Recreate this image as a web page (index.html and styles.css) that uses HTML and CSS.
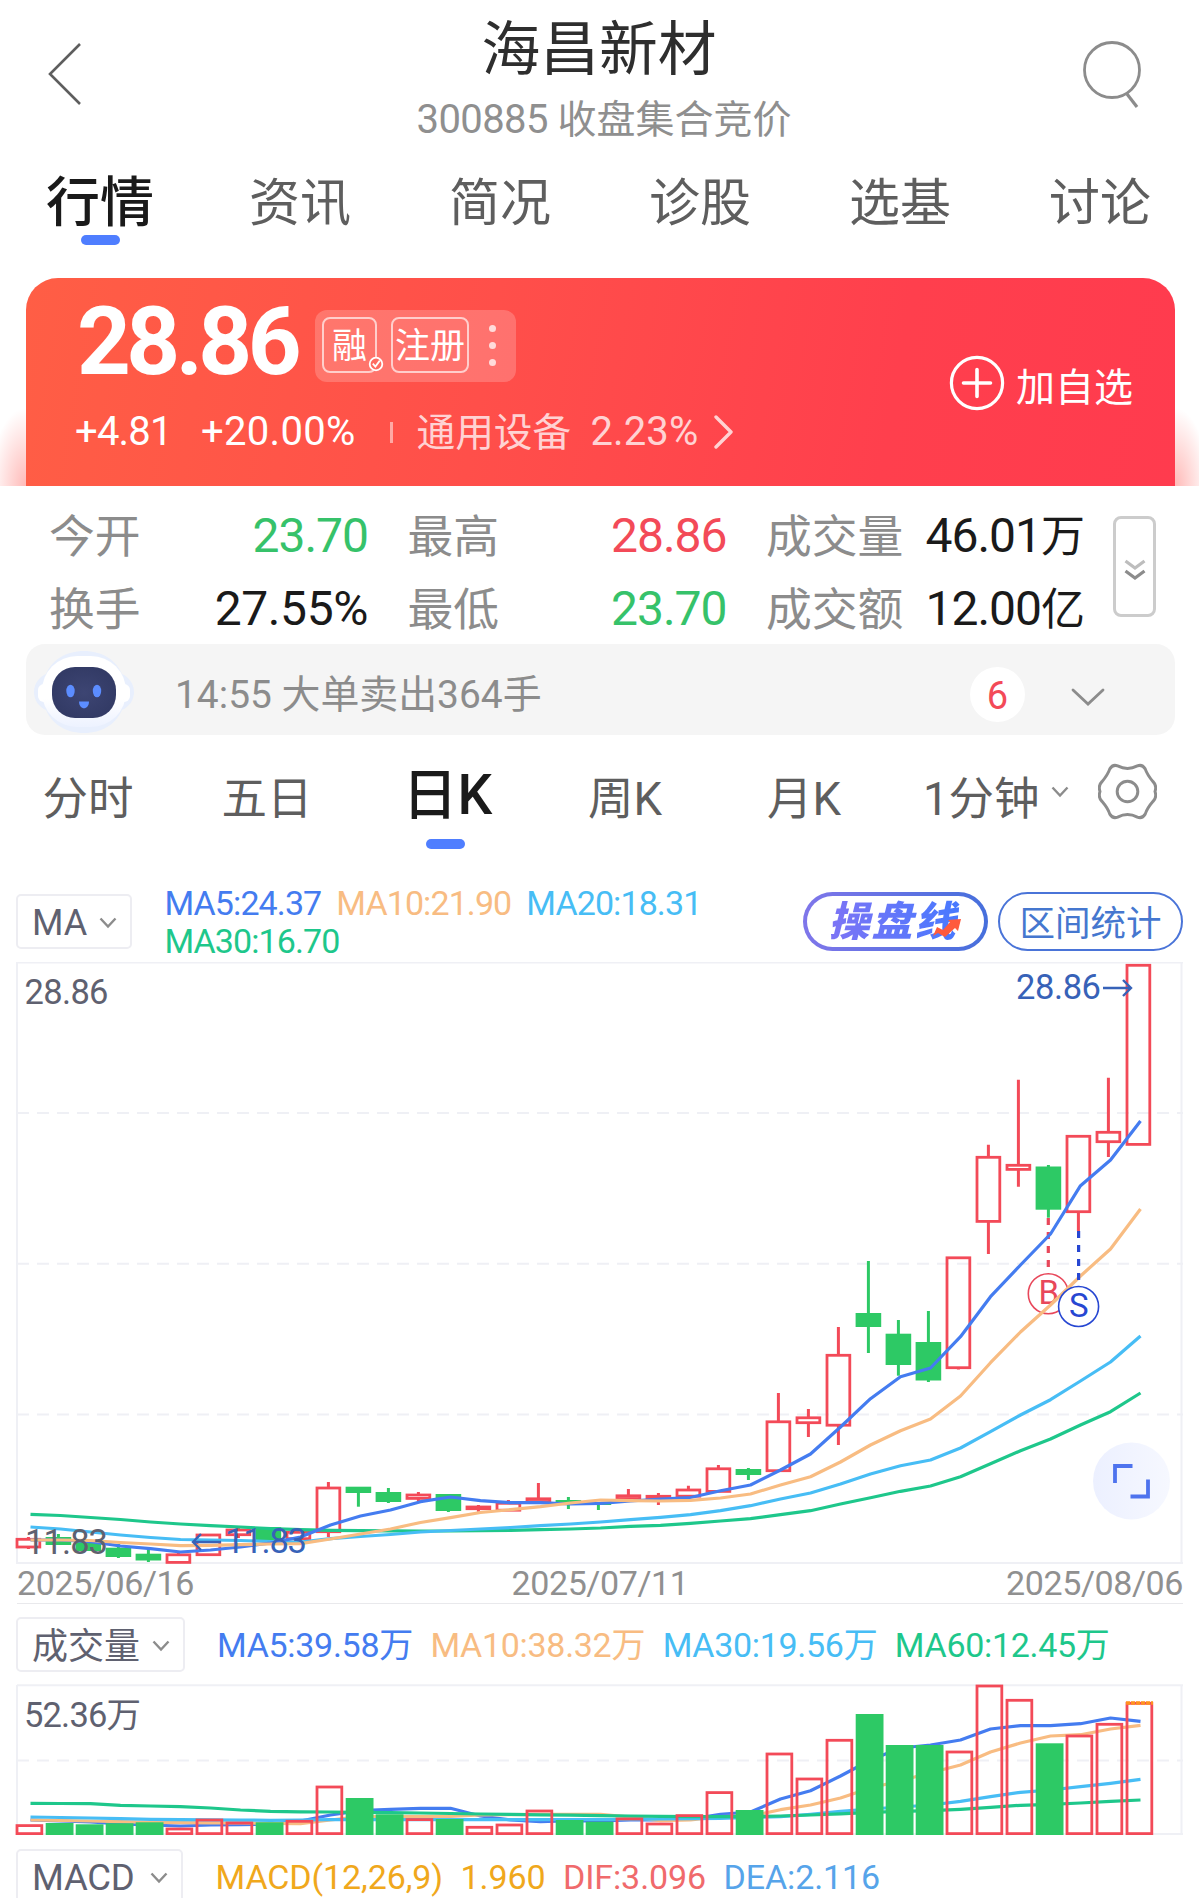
FILE: index.html
```
<!DOCTYPE html>
<html lang="zh-CN">
<head>
<meta charset="utf-8">
<title>海昌新材 300885</title>
<link rel="stylesheet" href="styles.css">
</head>
<body>
<div class="app">
  <header class="header">
    <svg class="icon-back" viewBox="0 0 36 64" fill="none"><path d="M33 2 3 32 33 62" stroke="#5e5e5e" stroke-width="2.6"/></svg>
    <div class="heading">
      <h1 class="title">海昌新材</h1>
      <p class="subtitle"><span class="code">300885</span> 收盘集合竞价</p>
    </div>
    <svg class="icon-search" viewBox="0 0 60 70" fill="none" stroke="#8c8c8c" stroke-width="2.8"><circle cx="30" cy="30" r="27.5"/><path d="m45 54 10 13" stroke-width="3.2"/></svg>
  </header>

  <nav class="tabs">
    <a class="tab active">行情</a><a class="tab">资讯</a><a class="tab">简况</a><a class="tab">诊股</a><a class="tab">选基</a><a class="tab">讨论</a>
  </nav>

  <section class="quote-wrap">
    <div class="quote">
      <div class="quote-main">
        <div class="price-row">
          <span class="price">28.86</span>
          <div class="badges">
            <span class="badge badge-margin">融<svg class="badge-check" viewBox="0 0 16 16" fill="none" stroke="#fff" stroke-width="1.8"><circle cx="8" cy="8" r="6.3" fill="#ff6c62"/><path d="m4.8 7.6 2.6 3 4.4-6"/></svg></span>
            <span class="badge">注册</span>
            <span class="dots"><i></i><i></i><i></i></span>
          </div>
        </div>
        <div class="change-row">
          <span class="delta">+4.81</span>
          <span class="percent">+20.00%</span>
          <i class="divider"></i>
          <span class="sector">通用设备</span>
          <span class="sector-change">2.23%</span>
          <svg class="icon-next" viewBox="0 0 20 34" fill="none"><path d="m2 2 15 15L2 32" stroke="#ffd2d3" stroke-width="3.4" stroke-linecap="round" stroke-linejoin="round"/></svg>
        </div>
      </div>
      <div class="add">
        <svg class="icon-add" viewBox="0 0 56 56" fill="none" stroke="#fff" stroke-width="3.6" stroke-linecap="round"><circle cx="28" cy="28" r="25.6" stroke-width="3.2"/><path d="M28 14.5v27M14.5 28h27"/></svg>
        <span>加自选</span>
      </div>
    </div>
  </section>

  <section class="stats">
    <dl class="stat-grid">
      <div class="stat"><dt>今开</dt><dd class="down">23.70</dd></div>
      <div class="stat"><dt>最高</dt><dd class="up">28.86</dd></div>
      <div class="stat"><dt>成交量</dt><dd>46.01<small>万</small></dd></div>
      <div class="stat"><dt>换手</dt><dd class="turnover">27.55%</dd></div>
      <div class="stat"><dt>最低</dt><dd class="down">23.70</dd></div>
      <div class="stat"><dt>成交额</dt><dd>12.00<small>亿</small></dd></div>
    </dl>
    <div class="expander">
      <svg viewBox="0 0 22 22" fill="none" stroke-width="3.2"><path d="m1.5 2 9.5 7 9.5-7" stroke="#bdbdbd"/><path d="m1.5 12 9.5 7 9.5-7" stroke="#8c8c8c"/></svg>
    </div>
  </section>

  <section class="notice">
    <svg class="robot" viewBox="0 0 100 82">
      <defs>
        <radialGradient id="face"><stop offset="0" stop-color="#3d4573"/><stop offset="1" stop-color="#333b66"/></radialGradient>
        <linearGradient id="head" x2="0" y2="1"><stop offset=".6" stop-color="#fff"/><stop offset="1" stop-color="#edf2ff"/></linearGradient>
      </defs>
      <path d="M50 0C68 0 82 9 88 23c7 3 12 10 12 18s-5 15-12 18C82 73 68 82 50 82S18 73 12 59C5 56 0 49 0 41s5-15 12-18C18 9 32 0 50 0Z" fill="#e8effd"/>
      <rect x="4" y="33" width="92" height="18" rx="6" fill="#fff"/>
      <rect x="8" y="5" width="84" height="71" rx="35" fill="url(#head)"/>
      <rect x="18" y="16" width="64" height="51" rx="23" fill="url(#face)"/>
      <ellipse cx="36.500" cy="40" rx="4.200" ry="6.300" fill="#5c8dff"/><ellipse cx="63" cy="40" rx="4.200" ry="6.300" fill="#5c8dff"/>
      <path d="M45 50.500h10c0 9-10 9-10 0Z" fill="#5c8dff"/>
    </svg>
    <p class="notice-text"><span>14:55</span> 大单卖出<span>364</span>手</p>
    <span class="count">6</span>
    <svg class="icon-down" viewBox="0 0 34 18" fill="none"><path d="m2 2 15 14L32 2" stroke="#8c8c8c" stroke-width="2.8" stroke-linecap="round"/></svg>
  </section>

  <nav class="periods">
    <a>分时</a><a>五日</a><a class="active">日K</a><a>周K</a><a>月K</a>
    <a class="minutes">1分钟<svg class="caret" viewBox="0 0 18 12" fill="none"><path d="m1.500 1.500 7.500 8 7.500-8" stroke="#8c8c8c" stroke-width="2.400"/></svg></a>
    <svg class="icon-gear" viewBox="0 0 60 60" fill="none" stroke="#8c8c8c" stroke-width="3"><path d="M20 4Q15 2 12 7Q10 13 4 20 Q0 24 2 30Q0 36 4 40Q10 47 12 53Q15 58 20 56Q30 51 40 56Q45 58 48 53Q50 47 56 40Q60 36 58 30Q60 24 56 20Q50 13 48 7Q45 2 40 4Q30 9 20 4Z"/><circle cx="30" cy="30" r="10.500"/></svg>
  </nav>

  <section class="ma-bar">
    <button class="picker">MA<svg class="caret" viewBox="0 0 18 12" fill="none"><path d="m1.500 1.500 7.500 8 7.500-8" stroke="#8c8c8c" stroke-width="2.400"/></svg></button>
    <div class="legend">
      <span class="blue">MA5:24.37</span><span class="orange">MA10:21.90</span><span class="cyan">MA20:18.31</span><span class="green">MA30:16.70</span>
    </div>
    <div class="actions">
      <button class="pill trend"><span class="trend-text">操盘线</span><svg class="trend-arrow" viewBox="0 0 30 20"><path d="M1 18 5 9l6 3 7-8-2-2 13-1-3 12-3-3-10 9-7-4Z" fill="#ff5a3d"/></svg></button>
      <button class="pill">区间统计</button>
    </div>
  </section>

  <svg class="price-chart" id="price" viewBox="0 962 1199 602">
    <defs><linearGradient id="full"><stop offset="0" stop-color="#ecf0ff"/><stop offset="1" stop-color="#f6f8ff"/></linearGradient></defs>
    <g class="frame"><path d="M17 962.5H1183" stroke-width="1"/><path d="M17 962V1563H1183M1181.500 962V1563"/><path class="grid" d="M17 1113H1183M17 1263.700H1183M17 1414.500H1183"/></g>
    <g id="candles"></g>
    <g class="marker buy"><path d="M1048.300 1218V1270"/><circle cx="1048.300" cy="1293.700" r="20"/><text x="1048.800" y="1303.500">B</text></g>
    <g id="price-lines"></g>
    <g class="marker sell"><path d="M1078.600 1231V1280"/><circle cx="1078.600" cy="1306.500" r="20"/><text x="1078.800" y="1317">S</text></g>
    <g class="axis"><text x="24.500" y="1003.500" textLength="84">28.86</text><text x="25" y="1553.500" textLength="83">11.83</text></g>
    <g class="extreme"><text x="1016" y="998.500" textLength="85">28.86</text><path d="M1103 988H1131M1123 980l8 8-8 8"/><text x="225" y="1552.500" textLength="82">11.83</text><path d="M221 1542H193M201 1534l-8 8 8 8"/></g>
    <g class="fullscreen"><circle cx="1131.500" cy="1481" r="38.500"/><path d="M1132.500 1466H1115V1483M1130.500 1496.500H1148V1479.500"/></g>
  </svg>
  <div class="dates"><span>2025/06/16</span><span>2025/07/11</span><span>2025/08/06</span></div>

  <section class="sub-bar">
    <button class="picker"><span class="picker-label">成交量</span><svg class="caret" viewBox="0 0 18 12" fill="none"><path d="m1.500 1.500 7.500 8 7.500-8" stroke="#8c8c8c" stroke-width="2.400"/></svg></button>
    <div class="legend volume-legend"><span class="blue">MA5:39.58万</span><span class="orange">MA10:38.32万</span><span class="cyan">MA30:19.56万</span><span class="green">MA60:12.45万</span></div>
  </section>
  <svg class="volume-chart" id="volume" viewBox="0 1684 1199 152">
    <g class="frame"><path d="M17 1685.300H1183" stroke-width="1"/><path d="M17 1685V1834H1183M1181.500 1685V1834"/><path class="grid" d="M17 1760.500H1183"/></g>
    <g id="volume-lines"></g>
    <g id="bars"></g>
    <g class="axis"><text x="24" y="1727" textLength="117">52.36万</text></g>
  </svg>
  <section class="sub-bar macd-bar">
    <button class="picker">MACD<svg class="caret" viewBox="0 0 18 12" fill="none"><path d="m1.500 1.500 7.500 8 7.500-8" stroke="#8c8c8c" stroke-width="2.400"/></svg></button>
    <div class="legend macd-legend"><span class="gold">MACD(12,26,9)</span><span class="gold">1.960</span><span class="red">DIF:3.096</span><span class="sky">DEA:2.116</span></div>
  </section>
</div>
<script src="charts.js"></script>
</body>
</html>
```
FILE: styles.css
```
* { box-sizing: border-box; }
body { margin: 0; background: #fff; }
h1, p, dl, dd { margin: 0; font-weight: 400; }
button { margin: 0; padding: 0; font: inherit; background: none; }
svg { display: block; flex: none; }

.app {
  width: 1199px;
  height: 1898px;
  overflow: hidden;
  font-family: Roboto, "Noto Sans CJK SC", sans-serif;
  color: #1a1a1a;
  white-space: nowrap;
}

/* Header */
.header { display: flex; justify-content: space-between; height: 150px; padding: 10px 57px 0 47px; }
.icon-back { width: 36px; height: 64px; margin-top: 32px; }
.icon-search { width: 60px; height: 70px; margin-top: 30px; }
.heading { text-align: center; padding: 2px 0 0 35px; }
.title { padding-right: 2px; font-size: 58.800px; line-height: 76px; color: #2e2e2e; }
.subtitle { margin-top: 7px; padding-left: 8px; font-size: 39px; line-height: 50px; color: #8f8f8f; }
.code { font-size: 40px; letter-spacing: -.6px; }

/* Section tabs */
.tabs { display: grid; grid-template-columns: repeat(6, 200px); height: 128px; padding-top: 18px; }
.tab { display: flex; flex-direction: column; align-items: center; font-size: 51px; line-height: 72px; color: #5e5e5e; }
.tab.active { font-size: 54px; font-weight: 500; color: #1a1a1a; }
.tab.active::after, .periods .active::after { content: ""; width: 39px; height: 10px; border-radius: 5px; background: #4f7eff; }
.tab.active::after { margin-top: -5px; }

/* Quote card */
.quote-wrap {
  height: 208px;
  padding: 0 24px 0 26px;
  background:
    radial-gradient(ellipse 36px 78px at 26px 100%, rgba(255, 90, 85, .42), rgba(255, 90, 85, 0)) no-repeat left / 26px 100%,
    radial-gradient(ellipse 34px 78px at 0 100%, rgba(255, 90, 85, .42), rgba(255, 90, 85, 0)) no-repeat right / 24px 100%;
}
.quote {
  display: flex;
  justify-content: space-between;
  height: 208px;
  padding: 0 42px 0 50px;
  border-radius: 32px 32px 0 0;
  background: linear-gradient(100deg, #ff5e45 0%, #ff4f4a 40%, #ff3f4d 75%, #ff3b4e 100%);
  color: #fff;
}
.price-row { display: flex; align-items: center; height: 124px; padding-top: 12px; }
.price { width: 239px; padding-left: 1px; font-size: 94px; font-weight: 700; line-height: 110px; letter-spacing: -4.600px; margin-top: -8px; }
.badges { display: flex; align-items: center; width: 201px; height: 72px; margin-top: 0; padding-left: 7px; border-radius: 12px; background: rgba(255, 255, 255, .2); }
.badge { position: relative; height: 56px; padding: 1px 2px 0; border: 2px solid rgba(255, 255, 255, .65); border-radius: 8px; font-size: 35px; line-height: 54px; margin-right: 20px; margin-top: -2px; }
.badge-margin { width: 55px; padding: 1px 8px 0; margin-right: 14px; }
.badge-check { position: absolute; right: -9px; bottom: -1px; width: 16px; height: 16px; }
.dots { display: grid; gap: 10px; margin-top: -2px; }
.dots i { width: 7px; height: 7px; border-radius: 50%; background: rgba(255, 255, 255, .75); }
.change-row { display: flex; align-items: center; height: 60px; font-size: 40px; line-height: 60px; }
.delta { width: 126px; letter-spacing: -.8px; margin-left: -1px; }
.percent { width: 189px; letter-spacing: .3px; }
.divider { width: 2.500px; height: 21px; background: rgba(255, 255, 255, .5); }
.sector { width: 173px; padding-left: 24px; box-sizing: content-box; font-size: 38.700px; color: #ffd2d3; padding-top: 1px; }
.sector-change { width: 124px; padding-left: 1px; letter-spacing: .1px; color: #ffd2d3; }
.icon-next { width: 20px; height: 34px; }
.add { display: flex; align-items: center; gap: 11px; padding-top: 2px; font-size: 39px; line-height: 56px; }
.icon-add { width: 56px; height: 56px; }
.add span { padding-top: 9px; }

/* Key figures */
.stats { display: flex; height: 158px; padding: 13px 43px 0 49px; justify-content: space-between; }
.stat-grid { display: grid; grid-template-columns: repeat(3, 319px); column-gap: 39.500px; grid-auto-rows: 73px; }
.stat { display: flex; justify-content: space-between; line-height: 73px; }
.stat dt { padding-top: 2px; font-size: 45.800px; color: #8c8c8c; }
.stat dd { font-size: 48px; letter-spacing: -1px; }
.stat .turnover { letter-spacing: -.4px; }
.stat small { font-size: 44px; letter-spacing: 0; }
.stat .up { color: #f34a58; }
.stat .down { color: #36c26a; }
.expander { display: flex; align-items: center; justify-content: center; width: 43px; height: 101px; margin-top: 17px; border: 3px solid #ccc; border-radius: 8px; }
.expander svg { width: 22px; height: 22px; margin-top: 6px; }

/* Notice */
.notice { display: flex; align-items: center; height: 91px; margin: 0 24px 0 26px; padding: 0 70px 0 8px; border-radius: 19px; background: #f5f5f5; }
.robot { width: 100px; height: 82px; margin-top: 4px; }
.notice-text { flex: 1; padding: 10px 0 0 41px; font-size: 38.900px; line-height: 60px; color: #8c8c8c; }
.count { display: block; width: 55px; height: 55px; margin: 9px 46px 0 0; border-radius: 50%; background: #fff; color: #f34a58; text-align: center; font-size: 38px; line-height: 58px; }
.icon-down { width: 34px; height: 18px; margin-top: 14px; }

/* Chart periods */
.periods { display: grid; grid-template-columns: repeat(5, 179px) 174px 60px; height: 157px; padding-top: 27px; }
.periods a { display: flex; flex-direction: column; align-items: center; padding: 2px 3px 0 0; font-size: 45.500px; line-height: 72px; color: #5e5e5e; }
.periods .active { margin-top: -5px; padding: 0; font-size: 55px; font-weight: 500; line-height: 76px; color: #1a1a1a; }
.periods .active::after { margin: 6px 4px 0 0; }
.periods .minutes { flex-direction: row; align-items: flex-start; justify-content: space-between; padding: 2px 0 0 28px; }
.caret { width: 18px; height: 12px; }
.minutes .caret { margin: 22px 0 0; }
.icon-gear { width: 59px; height: 59px; margin-left: 29px; }

/* Indicator bars */
.picker { display: flex; align-items: center; height: 55px; border: 2.500px solid #ededf2; border-radius: 5px; padding: 3px 13px 0 14px; font-size: 36px; line-height: 50px; color: #5f6170; justify-content: space-between; }
.picker-label { padding-top: 2px; }
.ma-bar { display: flex; height: 70px; padding: 0 16px 0 16px; }
.ma-bar .picker { width: 116px; margin-top: 2px; }
.legend { display: flex; flex-wrap: wrap; font-size: 34px; line-height: 38px; }
.ma-bar .legend { width: 637px; padding-left: 32.500px; margin-top: -8px; column-gap: 15px; align-content: flex-start; letter-spacing: -.9px; }
.blue { color: #447cf0; } .orange { color: #f8bc82; } .cyan { color: #47bdf5; } .green { color: #1ec78b; }
.gold { color: #f0a81c; } .red { color: #f06a6c; } .sky { color: #56a4ea; }
.actions { display: flex; gap: 10px; margin-left: auto; }
.pill { position: relative; display: flex; justify-content: center; width: 185px; height: 59px; padding-top: 3px; border: 2.500px solid #4a74d8; border-radius: 30px; color: #4577cf; font-size: 35.500px; line-height: 54px; }
.trend { padding-top: 1px; border: 4px solid transparent; background: linear-gradient(#fff, #fff) padding-box, linear-gradient(90deg, #7f76ea, #466fdc) border-box; }
.trend-text { padding-right: 5px; font-size: 41px; font-weight: 900; font-style: italic; line-height: 50px; letter-spacing: 2px; background: linear-gradient(90deg, #7d74f5, #4679ff); background-clip: text; color: transparent; }
.trend-arrow { position: absolute; left: 125px; top: 22px; width: 30px; height: 20px; }

/* Charts */
.price-chart { width: 1199px; height: 602px; }
.volume-chart { width: 1199px; height: 152px; }
.frame path { fill: none; stroke: #eff0f5; stroke-width: 2; }
.frame .grid { stroke-dasharray: 12 8; }
.axis text, .extreme text { font-size: 34.500px; fill: #5f6170; }
.extreme text { fill: #3762b8; }
.extreme path { fill: none; stroke: #3762b8; stroke-width: 2.400; }
.rise { fill: none; stroke: #f34a58; stroke-width: 2.800; }
.rise.wick, .fall.wick { stroke-width: 3; }
.fall { fill: #2dc965; stroke: none; }
.fall.wick { stroke: #2dc965; }
.line { fill: none; stroke-width: 3.200; stroke-linejoin: round; }
.line.blue { stroke: #447cf0; } .line.orange { stroke: #f8bc82; } .line.cyan { stroke: #47bdf5; } .line.green { stroke: #1ec78b; }
.estimate { stroke: #ff921e; stroke-width: 3.500; stroke-dasharray: 4 1; }
.marker path { stroke-width: 3.200; stroke-dasharray: 7 7; }
.marker circle { fill: #fff; stroke-width: 1.600; }
.marker text { font-size: 33px; text-anchor: middle; }
.buy { stroke: #e8475a; fill: #e8475a; }
.sell { stroke: #2747d2; fill: #2747d2; }
.marker text { stroke: none; }
.fullscreen circle { fill: url(#full); }
.fullscreen path { fill: none; stroke: #4e73ee; stroke-width: 3.800; }
.dates { display: flex; justify-content: space-between; height: 40px; margin: 0 16px 0 17px; border-bottom: 1px solid #e9e9ec; font-size: 34px; line-height: 39px; letter-spacing: -.4px; color: #909090; }

.sub-bar { display: flex; height: 80px; padding: 13px 16px 0; }
.sub-bar .picker { width: 169px; }
.volume-legend { flex: 1; padding: 9px 0 0 32px; column-gap: 17.500px; letter-spacing: -.3px; }
.macd-bar { height: 62px; }
.macd-bar .picker { width: 167px; height: 60px; padding-bottom: 4px; padding-top: 2px; font-size: 36.500px; letter-spacing: -.3px; }
.macd-legend { flex: 1; padding: 9px 0 0 32.500px; column-gap: 17.500px; letter-spacing: -.1px; }
```
FILE: charts.js
```
// Candles: [direction, body top, body bottom, wick top, wick bottom]
const candles = [
  [1,1538,1548.3,1537,1549],[0,1537,1545,1534,1545],[0,1541,1551,1541,1551],[0,1547.7,1557,1544,1558],
  [0,1553.7,1560.5,1548,1562],[1,1553.5,1563.7,1553,1563],[1,1533.7,1556,1534,1556],[1,1528.7,1536,1528,1538],
  [0,1527,1540,1527,1540],[1,1531,1540,1528,1540],[1,1486.7,1533,1482,1537],[0,1486.7,1493,1487,1506.7],
  [0,1492,1502,1488,1503],[1,1493.7,1499.7,1492,1503],[0,1494,1511,1494,1512],[1,1505.7,1510,1505,1511.7],
  [1,1502,1511.5,1500,1511],[1,1497.5,1503,1483,1503],[0,1500,1503,1497,1509],[0,1502,1505,1502,1510],
  [1,1494.5,1500,1489,1500],[1,1495,1499.5,1493,1505],[1,1488.7,1497.5,1485.7,1497],[1,1467.5,1492.7,1465,1492],
  [0,1469,1475,1468,1480],[1,1420.5,1472,1393,1472],[1,1416.5,1424,1409,1437],[1,1354,1426.5,1327,1445],
  [0,1313,1327,1261,1353],[0,1333.7,1365,1320,1375.7],[0,1342,1380.5,1311,1382],[1,1256.5,1369,1257,1369.5],
  [1,1156,1222.7,1144.7,1254],[1,1164,1170.7,1079.7,1186.7],[0,1166.5,1209.7,1165,1217.7],[1,1135,1213,1135,1231],
  [1,1131,1143,1077.7,1157],[1,964,1145.7,964,1145]
];
const priceLines = {
  green: [1514.3,1515.5,1517.5,1519.5,1522,1524,1525.7,1527,1528.7,1529.7,1530.3,1530.7,1530.8,1531,1531,1530.7,1530.3,1529.7,1529,1528,1526.3,1525.3,1523.3,1521,1518.7,1514.7,1510.7,1504,1497.7,1491.3,1486,1476.7,1463.7,1450.7,1439,1425,1411.7,1393],
  cyan: [1527,1529,1532,1535,1537.5,1539.5,1540,1540.5,1541.5,1542,1538.7,1536.5,1534.5,1532,1530.5,1529,1527.5,1525.7,1524,1522,1519.7,1517.3,1514.7,1510.7,1505.7,1499,1493,1484,1474,1465.7,1460,1448,1431.7,1415,1399.7,1381,1362,1336],
  blue: [1540,1540,1541.7,1546,1548.7,1552,1550,1547,1543,1537,1525,1516,1510,1501.7,1497,1500.7,1502.7,1502.7,1504,1503.3,1501,1499,1497.5,1490.7,1485,1470,1454,1427,1398.7,1376.7,1368,1336.7,1296.7,1265,1234,1185.7,1160,1121],
  orange: [1540,1540,1540.5,1542.5,1544,1545.7,1545.3,1544.7,1544,1543.7,1539,1534,1529,1522.5,1517.7,1512.5,1509.7,1506.7,1503,1500,1500.7,1501,1500.3,1498,1494,1485,1476.7,1462,1445,1430.7,1419,1396,1362.7,1332,1305,1276,1249,1209]
};
// Volume bars: [direction, top]
const volumes = [
  [1,1824.3],[0,1823],[0,1824.3],[0,1823.3],[0,1822.3],[1,1827.7],[1,1818.7],[1,1821.7],[0,1822.3],[1,1820],
  [1,1785.7],[0,1798],[0,1814.3],[1,1818.3],[0,1819],[1,1826],[1,1823.7],[1,1809.7],[0,1820],[0,1821.7],
  [1,1817.7],[1,1822.7],[1,1814.3],[1,1791.3],[0,1810],[1,1752.7],[1,1777.7],[1,1739],[0,1714],[0,1745],
  [0,1745],[1,1750.7],[1,1684.7],[1,1699],[0,1743.3],[1,1734.7],[1,1723],[1,1702]
];
const volumeLines = {
  blue: [1820,1821,1822,1824,1825,1826,1825,1824.7,1824,1821,1815,1810.7,1809.3,1808.3,1808.3,1816,1820,1821.7,1820.7,1821,1820,1820,1819,1814.3,1812,1799,1790.7,1776,1760,1748,1745,1740,1729,1725.7,1725.7,1723.7,1718,1721.3],
  orange: [1820,1820.5,1821,1821.7,1822.3,1822.7,1822.8,1823,1823.3,1823.7,1820,1816.7,1816.7,1816.7,1816.3,1815,1814.7,1814.3,1814.3,1814.3,1817,1820.7,1820,1816.7,1816,1809.7,1805,1798,1788,1780.7,1772.7,1765,1752,1743,1736,1734.7,1729,1725.3],
  cyan: [1817,1817.5,1818,1818.7,1819.3,1819.7,1819.9,1820.1,1820.3,1820,1819.7,1819.7,1819.7,1819.7,1819.7,1819.7,1819.7,1819.7,1819.5,1819.5,1819.3,1819,1818.7,1818.3,1817.5,1816.7,1814.3,1811.3,1809,1807,1805,1801.3,1796.7,1792.3,1790,1786.7,1783.3,1779.3],
  green: [1803.3,1803.5,1803.7,1805.3,1806,1806.7,1808,1810,1811.3,1811.8,1812,1812.3,1812.7,1813,1813.5,1814,1814.4,1814.8,1815.2,1815.6,1816,1816.3,1816.6,1816.7,1816.7,1816,1815,1813.8,1812.3,1811.3,1810.7,1809.3,1807.3,1805.3,1804.3,1803,1801.3,1800]
};

const STEP = 30;
const path = (cls, d) => `<path class="${cls}" d="${d}"/>`;
const rect = (cls, x, y, w, h) => `<rect class="${cls}" x="${x}" y="${y}" width="${w}" height="${h}"/>`;

document.getElementById('candles').innerHTML = candles.map(([up, top, bottom, high, low], i) => {
  const x = 28.4 + STEP * i;
  if (!up) return path('fall wick', `M${x} ${high}V${low}`) + rect('fall', x - 12.8, top, 25.6, bottom - top);
  return path('rise wick', `M${x} ${high}V${top + 1}M${x} ${bottom - 1}V${low}`) +
    rect('rise', x - 11.4, top + 1.3, 22.8, Math.max(bottom - top - 2.6, 1.5));
}).join('');

document.getElementById('bars').innerHTML = volumes.map(([up, top], i) => {
  const x = 15.7 + STEP * i;
  return up ? rect('rise', x + 1.3, top + 1.3, 24.8, 1833.6 - top - 1.3) : rect('fall', x, top, 27.8, 1835 - top);
}).join('') + path('estimate', 'M1126 1703H1153');

const drawLines = (id, lines) => {
  document.getElementById(id).innerHTML = Object.entries(lines)
    .map(([name, ys]) => path('line ' + name, 'M' + ys.map((y, i) => `${30.5 + STEP * i} ${y}`).join('L'))).join('');
};
drawLines('price-lines', priceLines);
drawLines('volume-lines', volumeLines);
```
